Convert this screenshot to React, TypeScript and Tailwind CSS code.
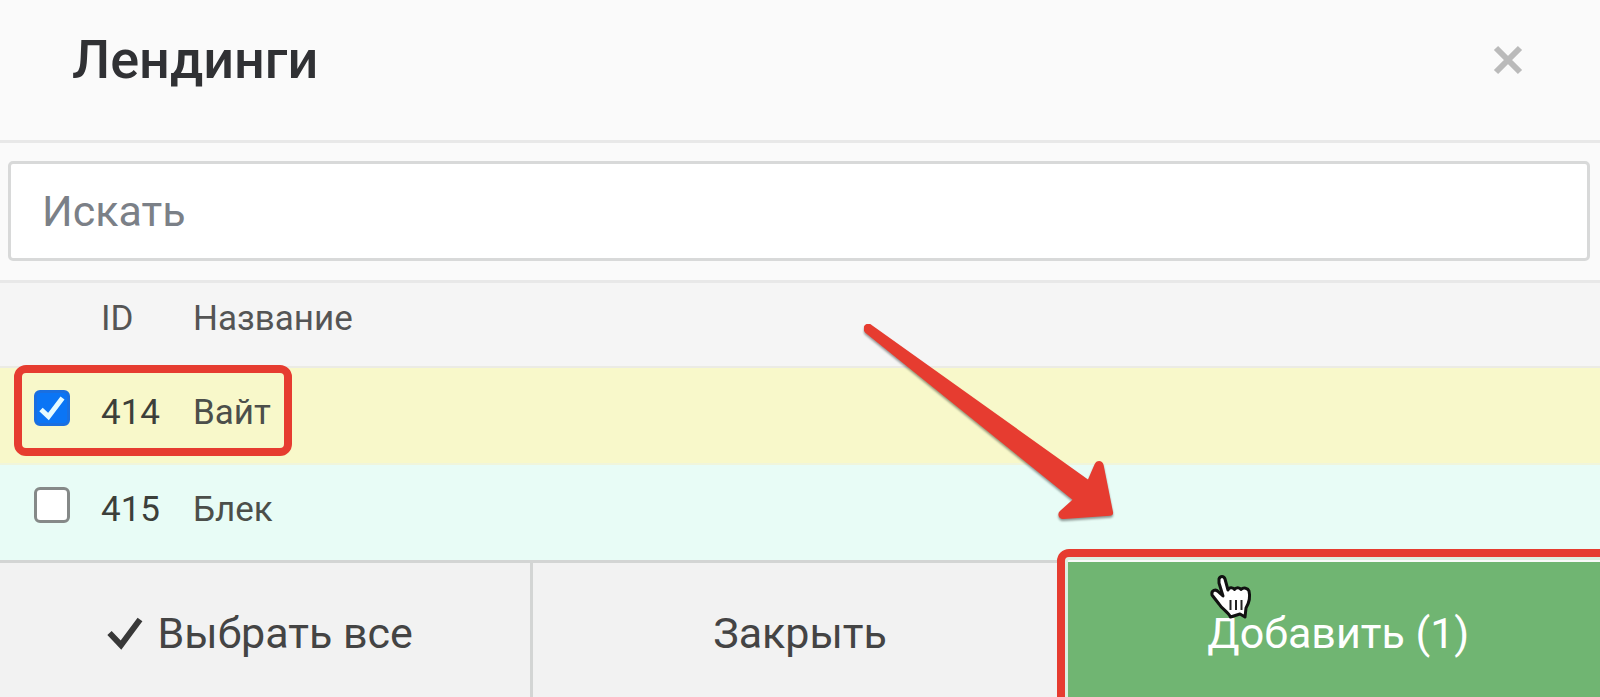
import { useState } from "react";
import clsx from "clsx";

const landings = [
  { id: 414, name: "Вайт", row: "bg-[#f8f8ca]" },
  { id: 415, name: "Блек", row: "bg-[#e8fcf6]" },
];

const Arrow = () => (
  <svg
    viewBox="0 0 260 200"
    className="pointer-events-none absolute top-[41px] left-[54%] h-[200px] w-[260px] drop-shadow-[0_2px_1px_rgba(0,0,0,0.4)]"
    aria-hidden="true"
  >
    <path
      fill="#e63c30"
      d="M7.6 0.9 L224 155.500 L230.500 140.500 C232.500 135.500 238.500 136 239.600 141 L249 188 C249.500 190.500 248 191.500 246 191.800 L200 195 C194.500 195.500 192.500 189.500 196.500 186.500 L208.500 175.700 L1 8.500 C-3 3.500 2 -3 7.600 0.900 Z"
    />
  </svg>
);

const Hand = () => (
  <svg
    viewBox="0 0 44 48"
    className="pointer-events-none absolute top-[14px] left-[142px] h-[48px] w-[44px]"
    aria-hidden="true"
  >
    <path
      fill="#fff"
      stroke="#111"
      strokeWidth="3"
      strokeLinejoin="round"
      d="M10 5 C11 1.500 15 1.500 16 5 L19 16 C20 13 24 13 25.500 15.500 C27 13 30.500 13 32 15.500 C34.500 13 39 14 40 17 C41.500 23 40 29 37 34 L36 43 L31 40 L21.500 43 C19 38 13 35 10 30 L3 21 C2 16 7 15 9 17.500 L14 22 L10 9 Z"
    />
    <path stroke="#222" strokeWidth="2" d="M21.500 26v10M27 26v10M32.500 26v10" />
  </svg>
);

const App = () => {
  const [query, setQuery] = useState("");
  const [selected, setSelected] = useState<number[]>([414]);

  const toggle = (id: number) => {
    setSelected(
      selected.includes(id)
        ? selected.filter((x) => x !== id)
        : [...selected, id]
    );
  };

  const rows = landings.filter((l) =>
    l.name.toLowerCase().includes(query.toLowerCase())
  );

  return (
    <div className="flex min-h-screen flex-col overflow-hidden bg-[#fafafa] font-[Roboto,sans-serif] text-[#444]">
      <header className="flex items-start justify-between border-b-3 border-[#e8e8e8] pt-[20px] pr-[76px] pb-[40px] pl-[72px]">
        <h1 className="text-[54px] leading-[80px] font-medium text-[#303134]">
          Лендинги
        </h1>
        <button type="button" aria-label="Закрыть окно" className="mt-[24px]">
          <svg viewBox="0 0 32 32" className="size-[32px]" fill="none">
            <path
              d="M4 4 28 28M28 4 4 28"
              stroke="#bababa"
              strokeWidth="6"
            />
          </svg>
        </button>
      </header>

      <div className="border-b-3 border-[#e8e8e8] pt-[18px] pr-[10px] pb-[19px] pl-[8px]">
        <input
          type="text"
          aria-label="Искать"
          placeholder="Искать"
          value={query}
          onChange={(e) => setQuery(e.target.value)}
          className="block h-[100px] w-full rounded-[5px] border-3 border-[#d8d9d9] bg-white px-[31px] text-[43px] outline-none placeholder:text-[#7b8087]"
        />
      </div>

      <div className="relative">
        <table className="w-full table-fixed text-left text-[35px] leading-[54px]">
          <colgroup>
            <col className="w-[101px]" />
            <col className="w-[92px]" />
            <col />
          </colgroup>
          <thead>
            <tr className="border-b-2 border-[#ebebe4] bg-[#f5f5f5] align-top text-[#555]">
              <td />
              <th className="pt-[9px] pb-[20px] font-normal">ID</th>
              <th className="pt-[9px] pb-[20px] font-normal">Название</th>
            </tr>
          </thead>
          <tbody>
            {rows.map((l) => (
              <tr
                key={l.id}
                className={clsx("border-b-2 border-[#f0f5dc] align-top last:border-b-0", l.row)}
              >
                <td className="pt-[22px] pl-[34px]">
                  <div className="relative size-[36px]">
                    <input
                      id={`landing-${l.id}`}
                      type="checkbox"
                      checked={selected.includes(l.id)}
                      onChange={() => toggle(l.id)}
                      className="peer block size-[36px] appearance-none rounded-[6px] border-3 border-[#858988] bg-white checked:border-[#1a6fe0] checked:bg-[#0b75f5]"
                    />
                    <svg
                      viewBox="0 0 36 36"
                      fill="none"
                      className="pointer-events-none absolute inset-0 hidden peer-checked:block"
                    >
                      <path d="M7 19.500 14.500 26.500 28.500 8" stroke="#e6fbff" strokeWidth="5" />
                    </svg>
                  </div>
                </td>
                <td className="pt-[18px] pb-[23px] text-[#3c3f3a]">{l.id}</td>
                <td className="pt-[18px] pb-[23px] text-[#4c4f4a]">
                  <label htmlFor={`landing-${l.id}`}>{l.name}</label>
                </td>
              </tr>
            ))}
          </tbody>
        </table>
        <div className="pointer-events-none absolute top-[82px] left-[14px] h-[91px] w-[278px] rounded-[12px] border-8 border-[#e63c30]" />
        <Arrow />
      </div>

      <footer className="grid flex-1 grid-cols-3 text-[43px] leading-[66px]">
        <button
          type="button"
          onClick={() => setSelected(landings.map((l) => l.id))}
          className="flex items-center justify-center gap-[14px] border-t-3 border-r-3 border-[#d3d5d4] bg-[#f2f2f2] pt-[6px] pr-[10px]"
        >
          <svg viewBox="0 0 36 34" className="h-[34px] w-[36px]" fill="none">
            <path d="M2.500 17 14 29 33 3.500" stroke="#383838" strokeWidth="6" />
          </svg>
          Выбрать все
        </button>
        <button
          type="button"
          className="border-t-3 border-[#d3d5d4] bg-[#f2f2f2] pt-[6px]"
        >
          Закрыть
        </button>
        <div className="relative flex">
          <button type="button" className="mt-[2px] flex-1 bg-[#70b572] pt-[7px] pl-[10px] text-white">
            Добавить ({selected.length})
          </button>
          <div className="pointer-events-none absolute -top-[11px] -right-[12px] -bottom-[12px] -left-[10px] rounded-[12px] border-8 border-[#e63c30] shadow-[inset_0_0_0_3px_#dcefe0]" />
          <Hand />
        </div>
      </footer>
    </div>
  );
};

export default App;
